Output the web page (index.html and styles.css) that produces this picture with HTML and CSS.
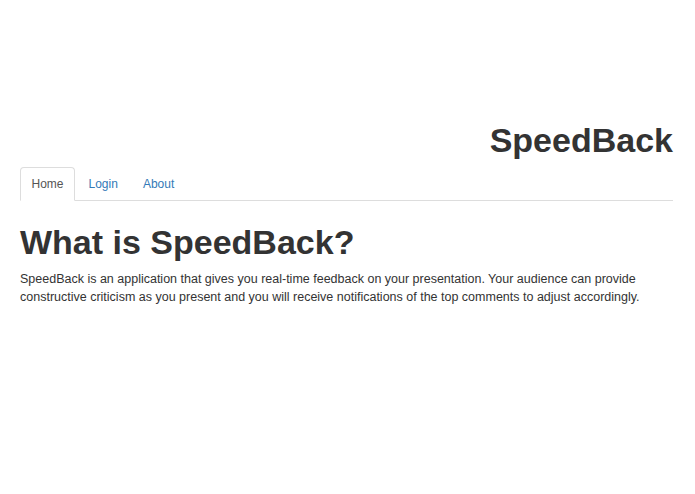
FILE: index.html
```html
<!DOCTYPE html>
<html>
<head>
<meta charset="utf-8">
<link rel="stylesheet" href="styles.css">
</head>
<body>
<div class="container">
  <header class="brand">SpeedBack</header>
  <ul class="tabs">
    <li class="tab active"><a href="#">Home</a></li>
    <li class="tab"><a href="#">Login</a></li>
    <li class="tab"><a href="#">About</a></li>
  </ul>
  <main class="content">
    <h1 class="title">What is SpeedBack?</h1>
    <p class="lead">SpeedBack is an application that gives you real-time feedback on your presentation. Your audience can provide constructive criticism as you present and you will receive notifications of the top comments to adjust accordingly.</p>
  </main>
</div>
</body>
</html>
```
FILE: styles.css
```css
html, body {
  margin: 0;
  padding: 0;
  background: #fff;
}
body {
  font-family: "Liberation Sans", Arial, sans-serif;
  color: #333;
}
.container {
  width: 653px;
  margin-left: 20px;
  padding-top: 120px;
}
.brand {
  text-align: right;
  font-size: 34px;
  font-weight: bold;
  line-height: 40px;
  color: #333;
}
.tabs {
  list-style: none;
  margin: 7px 0 0 0;
  padding: 0;
  display: flex;
  border-bottom: 1px solid #ddd;
}
.tab {
  margin-bottom: -1px;
  margin-right: 2px;
}
.tab a {
  display: block;
  padding: 0 10.5px;
  line-height: 32px;
  font-size: 12px;
  color: #337ab7;
  text-decoration: none;
  border: 1px solid transparent;
  border-radius: 4px 4px 0 0;
}
.tab.active a {
  color: #555;
  border-color: #ddd #ddd transparent #ddd;
  background: #fff;
}
.content {
  padding-top: 21px;
}
.title {
  margin: 0;
  font-size: 34px;
  line-height: 40px;
  font-weight: bold;
  color: #333;
}
.lead {
  margin: 8px 0 0 0;
  font-size: 12.5px;
  line-height: 18px;
  color: #333;
}
```
